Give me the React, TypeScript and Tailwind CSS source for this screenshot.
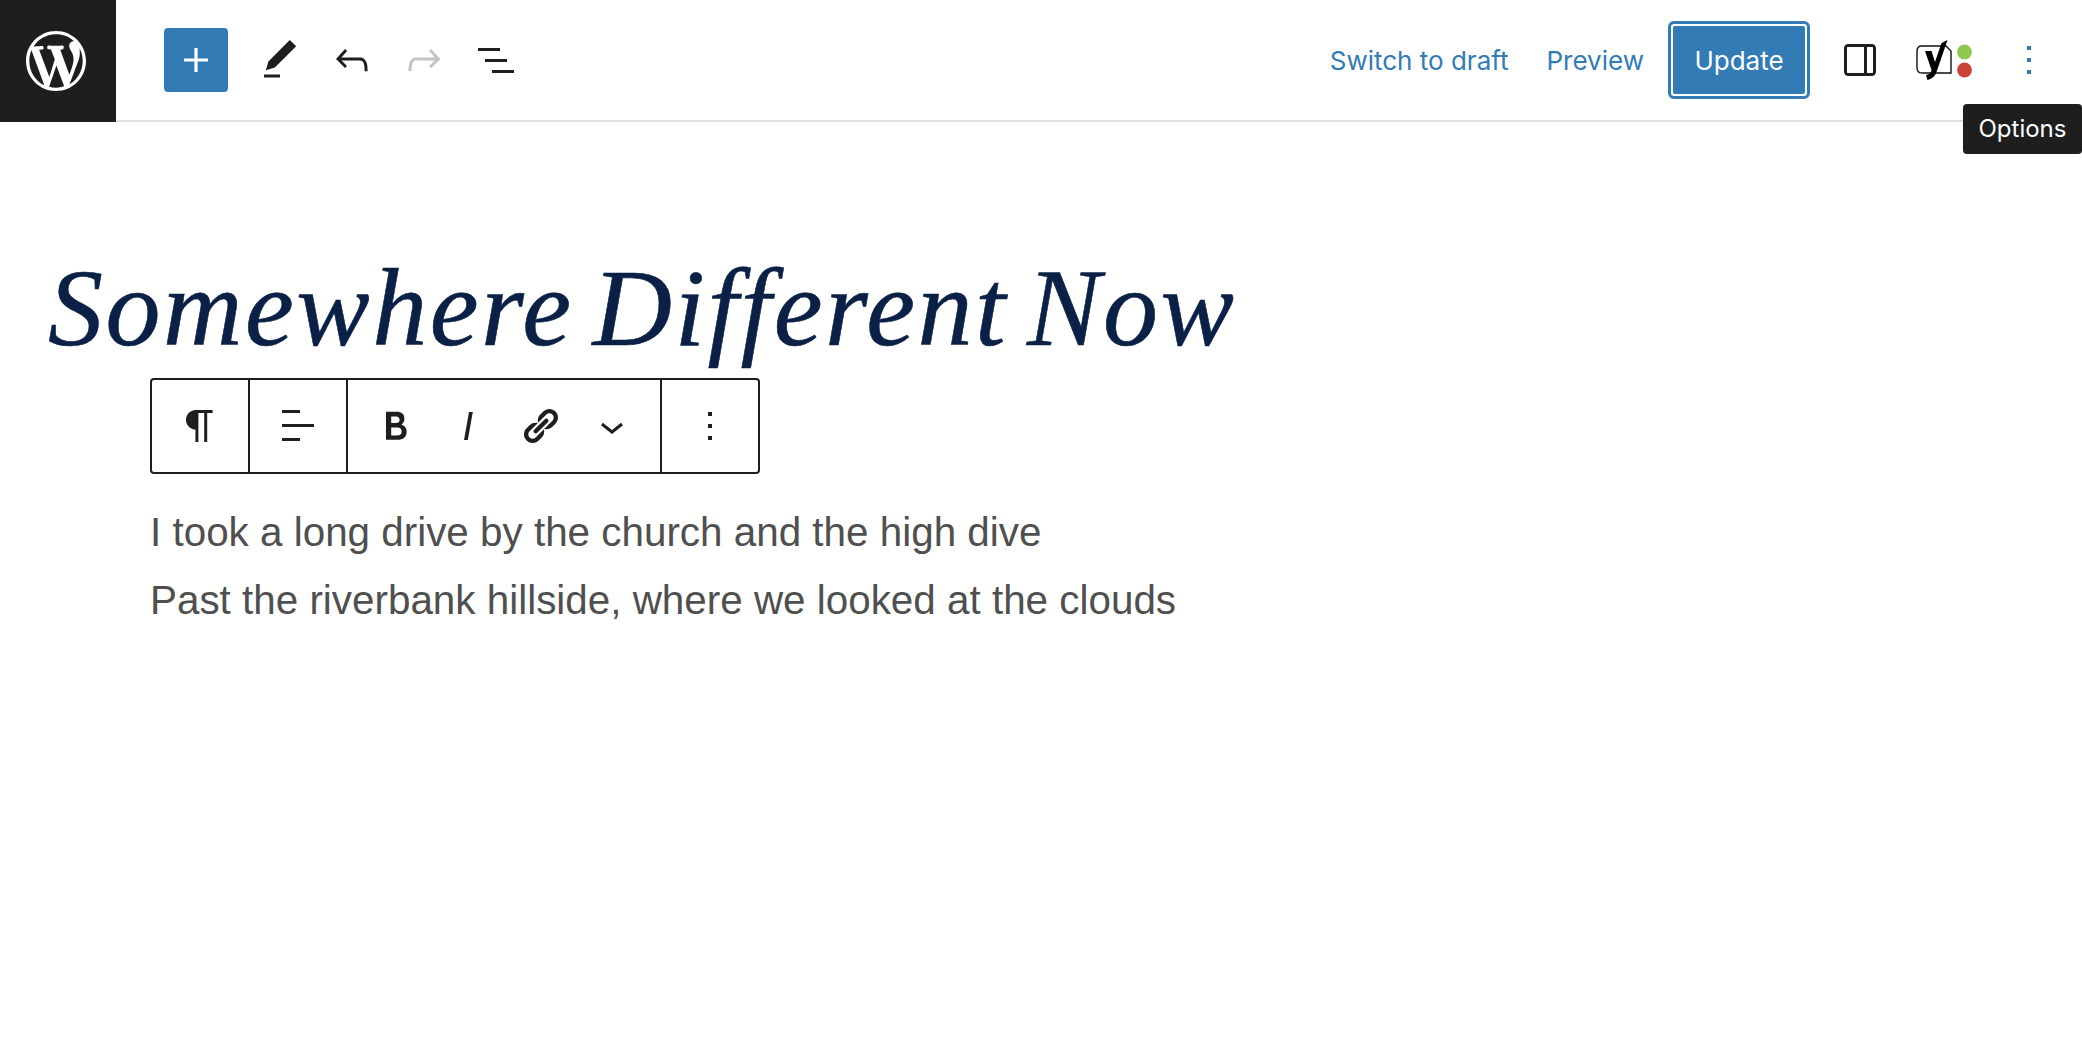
import type { ReactNode } from "react";

const ink = "#1e1e1e";
const blue = "#327bb5";

function Icon({ d, color = ink, box = 24, size = 48 }: { d: string; color?: string; box?: number; size?: number }) {
  return (
    <svg width={size} height={size} viewBox={`0 0 ${box} ${box}`} fill={color} className="block">
      <path d={d} />
    </svg>
  );
}

function Slot({ children }: { children: ReactNode }) {
  return <div className="w-[72px] h-[92px] flex items-center justify-center">{children}</div>;
}

const paths = {
  wp: "M20 10c0-5.51-4.49-10-10-10C4.48 0 0 4.49 0 10c0 5.52 4.48 10 10 10 5.51 0 10-4.48 10-10zM7.78 15.37L4.37 6.22c.55-.02 1.17-.08 1.17-.08.5-.06.44-1.13-.06-1.11 0 0-1.45.11-2.37.11-.18 0-.37 0-.58-.01C4.12 2.69 6.87 1.11 10 1.11c2.33 0 4.45.87 6.05 2.34-.68-.11-1.65.39-1.65 1.58 0 .74.45 1.36.9 2.1.35.61.55 1.36.55 2.46 0 1.49-1.4 5-1.4 5l-3.03-8.37c.54-.02.82-.17.82-.17.5-.05.44-1.25-.06-1.22 0 0-1.44.12-2.38.12-.87 0-2.33-.12-2.33-.12-.5-.03-.56 1.2-.06 1.22l.92.08 1.26 3.41zM17.41 10c.24-.64.74-1.87.43-4.25.7 1.29 1.05 2.71 1.05 4.25 0 3.29-1.73 6.24-4.4 7.78.97-2.59 1.94-5.2 2.92-7.78zM6.1 18.09C3.12 16.65 1.11 13.53 1.11 10c0-1.3.23-2.48.72-3.59C3.25 10.3 4.67 14.2 6.1 18.09zm4.03-6.63l2.58 6.98c-.86.29-1.76.45-2.71.45-.79 0-1.57-.11-2.29-.33.81-2.38 1.62-4.74 2.42-7.1z",
  plus: "M18 11.2h-5.2V6h-1.6v5.2H6v1.6h5.2V18h1.6v-5.2H18z",
  tools: "M20.1 5.1L16.9 2 6.2 12.7l-1.3 4.4 4.5-1.3L20.1 5.1zM4 20.8h8v-1.5H4v1.5z",
  undo: "M18.3 11.7c-.6-.6-1.4-.9-2.3-.9H6.7l2.9-3.3-1.1-1-4.5 5L8.5 16l1-1-2.7-2.7H16c.5 0 .9.2 1.3.5 1 1 1 3.4 1 4.5v.3h1.5v-.2c0-1.5 0-4.3-1.5-5.7z",
  redo: "M15.6 6.5l-1.1 1 2.9 3.3H8c-.9 0-1.7.3-2.3.9-1.4 1.5-1.4 4.2-1.4 5.6v.2h1.5v-.3c0-1.1 0-3.5 1-4.5.3-.3.7-.5 1.3-.5h9.2L14.5 15l1.1 1.1 4.6-4.6-4.6-5z",
  list: "M3 6h11v1.5H3V6Zm3.5 5.5h11V13h-11v-1.5ZM21 17H10v1.5h11V17Z",
  drawer: "M18 4H6c-1.1 0-2 .9-2 2v12c0 1.1.9 2 2 2h12c1.1 0 2-.9 2-2V6c0-1.1-.9-2-2-2zm-4 14.5H6c-.3 0-.5-.2-.5-.5V6c0-.3.2-.5.5-.5h8v13zm4.5-.5c0 .3-.2.5-.5.5h-2.5v-13H18c.3 0 .5.2.5.5v12z",
  more: "M13 19h-2v-2h2v2zm0-6h-2v-2h2v2zm0-6h-2V5h2v2z",
  paragraph: "M18.3 4H9.9v-.1l-.9.2c-2.3.4-4 2.4-4 4.8s1.7 4.4 4 4.8l.7.1V20h1.5V5.5h2.9V20h1.5V5.5h2.7V4z",
  align: "M13 5.5H4V4h9v1.5Zm7 7H4V11h16v1.5Zm-7 7H4V18h9v1.5Z",
  bold: "M14.7 11.3c1-.6 1.5-1.6 1.5-3 0-2.3-1.3-3.4-4-3.4H7v14h5.8c1.4 0 2.5-.3 3.3-1 .8-.7 1.2-1.7 1.2-2.9.1-1.9-.8-3.1-2.6-3.7zm-5.1-4h2.3c.6 0 1.1.1 1.4.4.3.3.5.7.5 1.2s-.2 1-.5 1.2c-.3.3-.8.4-1.4.4H9.6V7.3zm4.6 9c-.4.3-1 .4-1.7.4H9.6v-3.9h2.9c.7 0 1.3.2 1.7.5.4.3.6.8.6 1.5s-.2 1.2-.6 1.5z",
  italic: "M12.5 5L10 19h1.9l2.5-14z",
  link: "M17.74 2.76c1.68 1.69 1.68 4.41 0 6.1l-1.53 1.52c-1.12 1.12-2.7 1.47-4.14 1.09l2.62-2.61.76-.77.76-.76c.84-.84.84-2.2 0-3.04-.84-.85-2.2-.85-3.04 0l-.77.76-3.38 3.38c-.37-1.44-.02-3.02 1.1-4.14l1.52-1.53c1.69-1.68 4.42-1.68 6.1 0zM8.59 13.43l5.34-5.34c.42-.42.42-1.1 0-1.52-.44-.43-1.13-.39-1.53 0l-5.33 5.34c-.42.42-.42 1.1 0 1.52.44.43 1.13.39 1.52 0zm-.76 2.29l4.14-4.15c.38 1.44.03 3.02-1.09 4.14l-1.52 1.53c-1.69 1.68-4.41 1.68-6.1 0-1.68-1.68-1.68-4.42 0-6.1l1.53-1.52c1.12-1.12 2.7-1.47 4.14-1.1l-4.14 4.15c-.85.84-.85 2.2 0 3.05.84.84 2.2.84 3.04 0z",
  chevron: "M17.5 11.6L12 16l-5.5-4.4.9-1.2L12 14l4.5-3.6 1 1.2z",
};

function YoastMark() {
  return (
    <svg width="60" height="48" viewBox="0 0 60 48" className="block">
      <path d="M7 10h24l5 5v22H7c-3 0-5-2-5-5V15c0-3 2-5 5-5z" fill="none" stroke="#111" strokeWidth="1.4" />
      <path d="M10 15h6.5L20 26l6.5-19 6-3-11 32c-2 5-5 7-9 8l-1.5-5c3-.5 5-2 5.5-5z" fill="#000" />
      <circle cx="49.5" cy="16" r="7.4" fill="#8cc850" />
      <circle cx="49.5" cy="34" r="7.4" fill="#cc4138" />
    </svg>
  );
}

export default function App() {
  return (
    <div className="min-h-[1062px] bg-white relative overflow-hidden font-['Inter',sans-serif]">
      <header className="h-[122px] flex">
        <div className="w-[116px] h-[122px] bg-[#1e1e1e] flex items-center pl-[26px]">
          <Icon d={paths.wp} color="#fff" box={20} size={60} />
        </div>

        <div className="flex-1 flex items-center border-b-2 border-[#e0e0e0]">
          <div className="flex items-center ml-[48px]">
            <button className="w-[64px] h-[64px] rounded-[4px] bg-[#327bb5] flex items-center justify-center mr-[16px]">
              <Icon d={paths.plus} color="#fff" />
            </button>
            <Slot><Icon d={paths.tools} /></Slot>
            <Slot><Icon d={paths.undo} /></Slot>
            <Slot><Icon d={paths.redo} color="#c4c4c4" /></Slot>
            <Slot><Icon d={paths.list} /></Slot>
          </div>

          <div className="ml-auto flex items-center pr-[17px]">
            <span className="text-[26px] text-[#327bb5] mr-[38px]">Switch to draft</span>
            <span className="text-[26px] text-[#327bb5] mr-[24px]">Preview</span>
            <button className="w-[142px] h-[78px] rounded-[6px] border-[3px] border-[#327bb5] p-[2px] mr-[14px]">
              <span className="h-full w-full flex items-center justify-center rounded-[2px] bg-[#327bb5] text-white text-[26px]">Update</span>
            </button>
            <Slot><Icon d={paths.drawer} /></Slot>
            <div className="w-[97px] flex justify-center"><YoastMark /></div>
            <Slot><Icon d={paths.more} color={blue} /></Slot>
          </div>
        </div>
      </header>

      <div className="absolute right-0 top-[104px] h-[50px] w-[119px] rounded-[4px] bg-[#1e1e1e] flex items-center justify-center text-white text-[24px]">
        Options
      </div>

      <main>
        <h1 className="pl-[48px] pt-[121px] text-[110px] leading-[130px] tracking-[2.5px] [word-spacing:-11px] italic font-normal text-[#0a2046] [-webkit-text-stroke:0.6px_#0a2046] font-['Liberation_Serif',serif] whitespace-nowrap">
          Somewhere Different Now
        </h1>

        <div className="ml-[150px] mt-[5px] w-[610px] h-[96px] flex border-2 rounded-[4px] border-[#1e1e1e]">
          <div className="w-[98px] flex items-center justify-center border-r-2 border-[#1e1e1e]">
            <Icon d={paths.paragraph} />
          </div>
          <div className="w-[98px] flex items-center justify-center border-r-2 border-[#1e1e1e]">
            <Icon d={paths.align} />
          </div>
          <div className="w-[314px] flex items-center px-[12px] border-r-2 border-[#1e1e1e]">
            <Slot><Icon d={paths.bold} /></Slot>
            <Slot><Icon d={paths.italic} /></Slot>
            <Slot><Icon d={paths.link} box={20} size={40} /></Slot>
            <Slot><Icon d={paths.chevron} /></Slot>
          </div>
          <div className="flex-1 flex items-center justify-center">
            <Icon d={paths.more} />
          </div>
        </div>

        <div className="ml-[150px] mt-[24px] text-[40.4px] leading-[68px] text-[#4f4f4f] font-['Liberation_Sans',sans-serif]">
          <p>I took a long drive by the church and the high dive</p>
          <p>Past the riverbank hillside, where we looked at the clouds</p>
        </div>
      </main>
    </div>
  );
}
